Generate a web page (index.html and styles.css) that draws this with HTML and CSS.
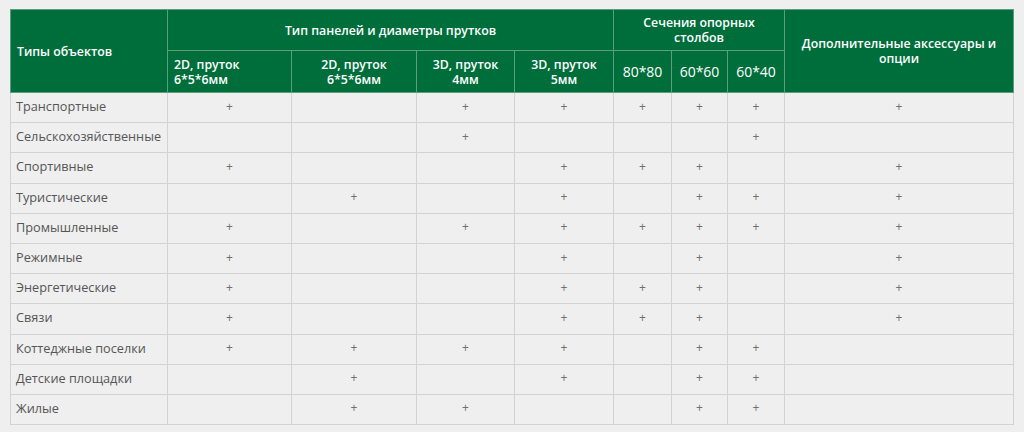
FILE: index.html
```html
<!DOCTYPE html>
<html lang="ru">
<head>
<meta charset="utf-8">
<link rel="stylesheet" href="styles.css">
</head>
<body>
<table class="grid">
  <colgroup>
    <col class="c-name"><col class="c-a"><col class="c-b"><col class="c-c"><col class="c-d">
    <col class="c-e"><col class="c-f"><col class="c-g"><col class="c-h">
  </colgroup>
  <thead>
    <tr class="h1">
      <th rowspan="2" class="left">Типы объектов</th>
      <th colspan="4">Тип панелей и диаметры прутков</th>
      <th colspan="3">Сечения опорных<br>столбов</th>
      <th rowspan="2">Дополнительные аксессуары и<br>опции</th>
    </tr>
    <tr class="h2">
      <th class="left">2D, пруток<br>6*5*6мм</th>
      <th>2D, пруток<br>6*5*6мм</th>
      <th>3D, пруток<br>4мм</th>
      <th>3D, пруток<br>5мм</th>
      <th class="big">80*80</th>
      <th class="big">60*60</th>
      <th class="big">60*40</th>
    </tr>
  </thead>
  <tbody>
    <tr><td>Транспортные</td><td>+</td><td></td><td>+</td><td>+</td><td>+</td><td>+</td><td>+</td><td>+</td></tr>
    <tr><td>Сельскохозяйственные</td><td></td><td></td><td>+</td><td></td><td></td><td></td><td>+</td><td></td></tr>
    <tr><td>Спортивные</td><td>+</td><td></td><td></td><td>+</td><td>+</td><td>+</td><td></td><td>+</td></tr>
    <tr><td>Туристические</td><td></td><td>+</td><td></td><td>+</td><td></td><td>+</td><td>+</td><td>+</td></tr>
    <tr><td>Промышленные</td><td>+</td><td></td><td>+</td><td>+</td><td>+</td><td>+</td><td>+</td><td>+</td></tr>
    <tr><td>Режимные</td><td>+</td><td></td><td></td><td>+</td><td></td><td>+</td><td></td><td>+</td></tr>
    <tr><td>Энергетические</td><td>+</td><td></td><td></td><td>+</td><td>+</td><td>+</td><td></td><td>+</td></tr>
    <tr><td>Связи</td><td>+</td><td></td><td></td><td>+</td><td>+</td><td>+</td><td></td><td>+</td></tr>
    <tr><td>Коттеджные поселки</td><td>+</td><td>+</td><td>+</td><td>+</td><td></td><td>+</td><td>+</td><td></td></tr>
    <tr><td>Детские площадки</td><td></td><td>+</td><td></td><td>+</td><td></td><td>+</td><td>+</td><td></td></tr>
    <tr><td>Жилые</td><td></td><td>+</td><td>+</td><td></td><td></td><td>+</td><td>+</td><td></td></tr>
  </tbody>
</table>
</body>
</html>
```
FILE: styles.css
```css
html, body {
  margin: 0;
  background: #efefef;
}
body {
  padding: 9px 11px 0 10px;
  font-family: "Open Sans", "Liberation Sans", sans-serif;
}
.grid {
  border-collapse: collapse;
  table-layout: fixed;
  width: 1003px;
}
.c-name { width: 157px; }
.c-a { width: 124px; }
.c-b { width: 125px; }
.c-c { width: 98px; }
.c-d { width: 99px; }
.c-e { width: 58px; }
.c-f { width: 56px; }
.c-g { width: 57px; }
.c-h { width: 229px; }

.grid th {
  background: #006e3b;
  color: #fff;
  font-weight: 600;
  font-size: 12.3px;
  line-height: 15px;
  text-align: center;
  vertical-align: middle;
  border: 1px solid #5d9d7b;
  padding: 0 6px;
}
.grid th.left { text-align: left; }
.grid th.big { font-size: 14px; font-weight: 500; }
.grid .h1 { height: 41px; }
.grid .h2 { height: 42px; }
.grid tbody tr { height: 30.2px; }
.grid td {
  border: 1px solid #d3d3d3;
  font-size: 12px;
  color: #6f6f6f;
  text-align: center;
  vertical-align: middle;
  padding: 0 0 3px;
}
.grid td:first-child {
  text-align: left;
  font-size: 12.7px;
  color: #555;
  padding-left: 5px;
}
```
